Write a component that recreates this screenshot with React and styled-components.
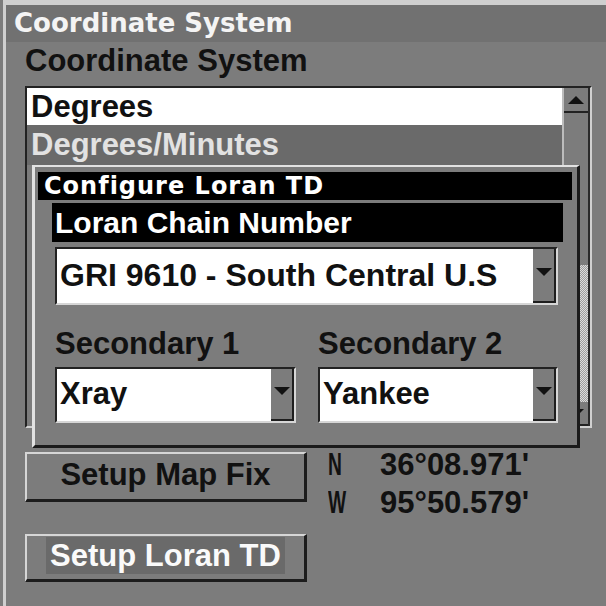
import React from 'react';
import styled, { createGlobalStyle } from 'styled-components';

const GlobalStyle = createGlobalStyle`
  html, body {
    margin: 0;
    padding: 0;
    background: #7c7c7c;
  }
  body {
    width: 606px;
    height: 606px;
    overflow: hidden;
  }
`;

const Screen = styled.div`
  width: 606px;
  height: 606px;
  box-sizing: border-box;
  padding-left: 3px;
  background: #7c7c7c;
  font-family: "Liberation Sans", Arial, sans-serif;
  font-weight: bold;
  overflow: hidden;
`;

const Window = styled.div`
  height: 100%;
  box-sizing: border-box;
  border-top: 5px solid #cfcfcf;
  border-left: 3px solid #cfcfcf;
`;

const TitleBar = styled.div`
  height: 37px;
  line-height: 37px;
  padding-left: 8px;
  background: #717171;
  color: #f4f4f4;
  font-family: "DejaVu Sans", Verdana, sans-serif;
  font-size: 26px;
  font-weight: bold;
  white-space: nowrap;
`;

const Body = styled.div`
  padding-left: 19px;
`;

const Label = styled.div`
  margin-top: ${p => p.$top || 0}px;
  font-size: 31px;
  line-height: 34px;
  color: #111;
  white-space: nowrap;
`;

const ListStage = styled.div`
  position: relative;
  margin-top: 8px;
  width: 567px;
  height: 342px;
`;

const ListBox = styled.div`
  display: flex;
  height: 100%;
  box-sizing: border-box;
  border-top: 2px solid #222;
  border-left: 2px solid #222;
  border-right: 2px solid #d0d0d0;
  border-bottom: 2px solid #d0d0d0;
  background: #7c7c7c;
`;

const Rows = styled.div`
  flex: 1;
`;

const Row = styled.div`
  height: ${p => p.$h}px;
  line-height: ${p => p.$h}px;
  padding-left: 4px;
  font-size: 31px;
  white-space: nowrap;
  background: ${p => (p.$selected ? '#6a6a6a' : '#fff')};
  color: ${p => (p.$selected ? '#e2e2e2' : '#111')};
`;

const Scrollbar = styled.div`
  width: 24px;
  display: flex;
  flex-direction: column;
  border-left: 2px solid #bcbcbc;
  border-right: 2px solid #2a2a2a;
`;

const ScrollButton = styled.div`
  height: ${p => p.$h}px;
  display: flex;
  align-items: center;
  justify-content: center;
  box-sizing: border-box;
  border-bottom: 2px solid #222;
  background: #7c7c7c;
`;

const Thumb = styled.div`
  height: 152px;
  background: #7c7c7c;
`;

const Track = styled.div`
  flex: 1;
  background: repeating-conic-gradient(#dcdcdc 0 25%, #9c9c9c 0 50%) 0 0 / 2px 2px;
`;

const Dialog = styled.div`
  position: absolute;
  z-index: 2;
  left: 7px;
  top: 79px;
  width: 548px;
  height: 283px;
  box-sizing: border-box;
  border-top: 2px solid #e2e2e2;
  border-left: 3px solid #e2e2e2;
  border-right: 3px solid #1a1a1a;
  border-bottom: 3px solid #1a1a1a;
  padding: 5px 5px 0 3px;
  background: #7c7c7c;
`;

const DialogTitle = styled.div`
  height: 28px;
  line-height: 29px;
  padding-left: 6px;
  background: #000;
  color: #fff;
  font-family: "DejaVu Sans", Verdana, sans-serif;
  font-size: 24px;
  font-weight: bold;
  letter-spacing: 1px;
  white-space: nowrap;
  overflow: hidden;
`;

const DialogBody = styled.div`
  padding: 3px 9px 0 14px;
`;

const SectionBar = styled.div`
  height: 39px;
  line-height: 39px;
  padding-left: 3px;
  background: #000;
  color: #fff;
  font-size: 30px;
  white-space: nowrap;
`;

const Fields = styled.div`
  margin-left: 3px;
  width: 503px;
`;

const Grid = styled.div`
  display: grid;
  grid-template-columns: 241px 240px;
  column-gap: 22px;
`;

const Select = styled.div`
  display: flex;
  height: ${p => p.$h}px;
  margin-top: ${p => p.$top || 0}px;
  box-sizing: border-box;
  border-top: 2px solid #222;
  border-left: 2px solid #222;
  border-right: 2px solid #d6d6d6;
  border-bottom: 2px solid #d6d6d6;
  background: #fff;
`;

const SelectText = styled.div`
  flex: 1;
  padding-left: 3px;
  padding-bottom: 2px;
  display: flex;
  align-items: center;
  font-size: ${p => p.$size || 31}px;
  color: #111;
  white-space: nowrap;
  overflow: hidden;
`;

const ArrowButton = styled.div`
  width: 23px;
  display: flex;
  align-items: center;
  justify-content: center;
  padding-bottom: 6px;
  box-sizing: border-box;
  background: #7c7c7c;
  border-right: 2px solid #1e1e1e;
  border-bottom: 2px solid #1e1e1e;
`;

const BottomArea = styled.div`
  display: flex;
  margin-top: 24px;
`;

const ButtonColumn = styled.div`
  display: flex;
  flex-direction: column;
  gap: 32px;
  width: 282px;
`;

const Button = styled.div`
  height: ${p => p.$h}px;
  box-sizing: border-box;
  display: flex;
  align-items: center;
  justify-content: center;
  padding-bottom: 4px;
  border-top: 2px solid #d6d6d6;
  border-left: 2px solid #d6d6d6;
  border-right: 3px solid #1c1c1c;
  border-bottom: 3px solid #1c1c1c;
  background: #7c7c7c;
  color: ${p => (p.$focused ? '#fafafa' : '#111')};
  font-size: 31px;
  white-space: nowrap;
`;

const Highlight = styled.span`
  display: inline-block;
  padding: 0 4px;
  line-height: 37px;
  background: #6a6a6a;
`;

const Coords = styled.div`
  margin-left: 21px;
  margin-top: -6px;
`;

const CoordRow = styled.div`
  display: flex;
  height: 38px;
  line-height: 38px;
  font-size: 31px;
  color: #111;
  white-space: nowrap;
`;

const Hemisphere = styled.span`
  display: inline-block;
  width: 52px;
  transform: scaleX(0.62);
  transform-origin: left center;
`;

const Triangle = ({ up }) => (
  <svg width="16" height="8" viewBox="0 0 16 8">
    <polygon points={up ? '8,0 16,8 0,8' : '0,0 16,0 8,8'} fill="#111" />
  </svg>
);

const Dropdown = ({ value, h, top, size }) => (
  <Select $h={h} $top={top}>
    <SelectText $size={size}>{value}</SelectText>
    <ArrowButton>
      <Triangle />
    </ArrowButton>
  </Select>
);

export default function App() {
  return (
    <>
      <GlobalStyle />
      <Screen>
        <Window>
          <TitleBar>Coordinate System</TitleBar>
          <Body>
            <Label $top={2}>Coordinate System</Label>
            <ListStage>
              <ListBox>
                <Rows>
                  <Row $h={37}>Degrees</Row>
                  <Row $h={40} $selected>Degrees/Minutes</Row>
                </Rows>
                <Scrollbar>
                  <ScrollButton $h={25}>
                    <Triangle up />
                  </ScrollButton>
                  <Thumb />
                  <Track />
                  <ScrollButton $h={24}>
                    <Triangle />
                  </ScrollButton>
                </Scrollbar>
              </ListBox>
              <Dialog>
                <DialogTitle>Configure Loran TD</DialogTitle>
                <DialogBody>
                  <SectionBar>Loran Chain Number</SectionBar>
                  <Fields>
                    <Dropdown value="GRI 9610 - South Central U.S" h={58} top={5} size={32} />
                    <Grid>
                      <Label $top={22}>Secondary 1</Label>
                      <Label $top={22}>Secondary 2</Label>
                      <Dropdown value="Xray" h={56} top={6} />
                      <Dropdown value="Yankee" h={56} top={6} />
                    </Grid>
                  </Fields>
                </DialogBody>
              </Dialog>
            </ListStage>
            <BottomArea>
              <ButtonColumn>
                <Button $h={50}>Setup Map Fix</Button>
                <Button $h={48} $focused>
                  <Highlight>Setup Loran TD</Highlight>
                </Button>
              </ButtonColumn>
              <Coords>
                <CoordRow>
                  <Hemisphere>N</Hemisphere>
                  36°08.971'
                </CoordRow>
                <CoordRow>
                  <Hemisphere>W</Hemisphere>
                  95°50.579'
                </CoordRow>
              </Coords>
            </BottomArea>
          </Body>
        </Window>
      </Screen>
    </>
  );
}
